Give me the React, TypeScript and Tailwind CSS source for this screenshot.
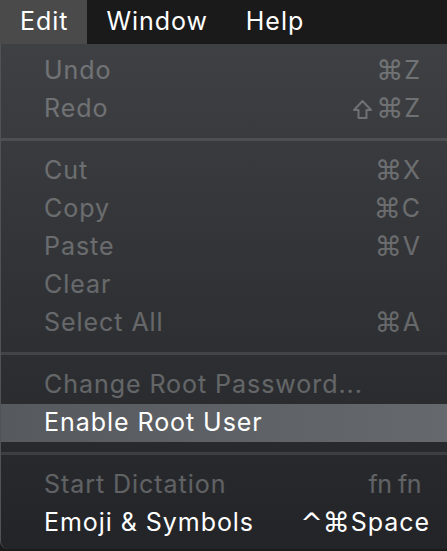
import React from 'react';

type Item =
  | { kind: 'sep' }
  | { kind: 'item'; label: string; mods?: string; shift?: boolean; key?: string; disabled?: boolean; active?: boolean; pr?: string };

const items: Item[] = [
  { kind: 'item', label: 'Undo', mods: '⌘', key: 'Z', disabled: true },
  { kind: 'item', label: 'Redo', shift: true, mods: '⌘', key: 'Z', disabled: true },
  { kind: 'sep' },
  { kind: 'item', label: 'Cut', mods: '⌘', key: 'X', disabled: true },
  { kind: 'item', label: 'Copy', mods: '⌘', key: 'C', disabled: true },
  { kind: 'item', label: 'Paste', mods: '⌘', key: 'V', disabled: true },
  { kind: 'item', label: 'Clear', disabled: true },
  { kind: 'item', label: 'Select All', mods: '⌘', key: 'A', disabled: true },
  { kind: 'sep' },
  { kind: 'item', label: 'Change Root Password...', disabled: true },
  { kind: 'item', label: 'Enable Root User', active: true },
  { kind: 'sep' },
  { kind: 'item', label: 'Start Dictation', key: 'fn fn', disabled: true },
  { kind: 'item', label: 'Emoji & Symbols', mods: '^⌘', key: 'Space', pr: 'pr-[17px]' },
];

const font = { fontFamily: 'Inter, "DejaVu Sans", sans-serif' };

// outlined shift arrow, as macOS draws it
const ShiftIcon = () => (
  <svg width="21" height="21" viewBox="0 0 21 21" className="mr-[3px]" fill="none" stroke="currentColor" strokeWidth="2" strokeLinejoin="round">
    <path d="M10.5 2 L19 11 H14.5 V19 H6.5 V11 H2 Z" />
  </svg>
);

export default function App() {
  return (
    <div className="w-[447px] h-[551px] bg-[#1b1b1b] overflow-hidden text-[25px] tracking-[0.038em]" style={font}>
      {/* Menu bar */}
      <div className="flex h-[44px] items-center bg-[#1a1a1a] text-white">
        <div className="h-full flex items-center pl-[20px] pr-[19px] bg-[#4a4a4a]">Edit</div>
        <div className="h-full flex items-center px-[19px]">Window</div>
        <div className="h-full flex items-center px-[19px]">Help</div>
      </div>

      {/* Dropdown */}
      <div className="h-[505px] border-l border-[#505255] rounded-bl-[8px] bg-gradient-to-b from-[#3e4043] to-[#222427] pt-[8px] pb-[7px]">
        {items.map((it, i) =>
          it.kind === 'sep' ? (
            <div key={i} className="h-[24px] pt-[10px]">
              <div className="h-[3px] bg-white/[0.1]" />
            </div>
          ) : (
            <div
              key={i}
              className={`h-[38px] flex items-center justify-between pl-[43px] ${it.pr ?? 'pr-[26px]'} ${
                it.active ? 'bg-gradient-to-r from-[#56595d] to-[#65696d] text-white' : ''
              } ${it.disabled ? 'text-white/[0.27]' : 'text-white'}`}
            >
              <span>{it.label}</span>
              {it.key && (
                <span className={`flex items-center ${it.key === 'fn fn' ? 'tracking-[-0.02em]' : ''}`}>
                  {it.shift && <ShiftIcon />}
                  {it.mods && (
                    <span style={{ fontFamily: '"DejaVu Sans", sans-serif' }} className="text-[27px] tracking-normal mr-[1px]">
                      {it.mods}
                    </span>
                  )}
                  <span>{it.key}</span>
                </span>
              )}
            </div>
          )
        )}
      </div>
    </div>
  );
}
